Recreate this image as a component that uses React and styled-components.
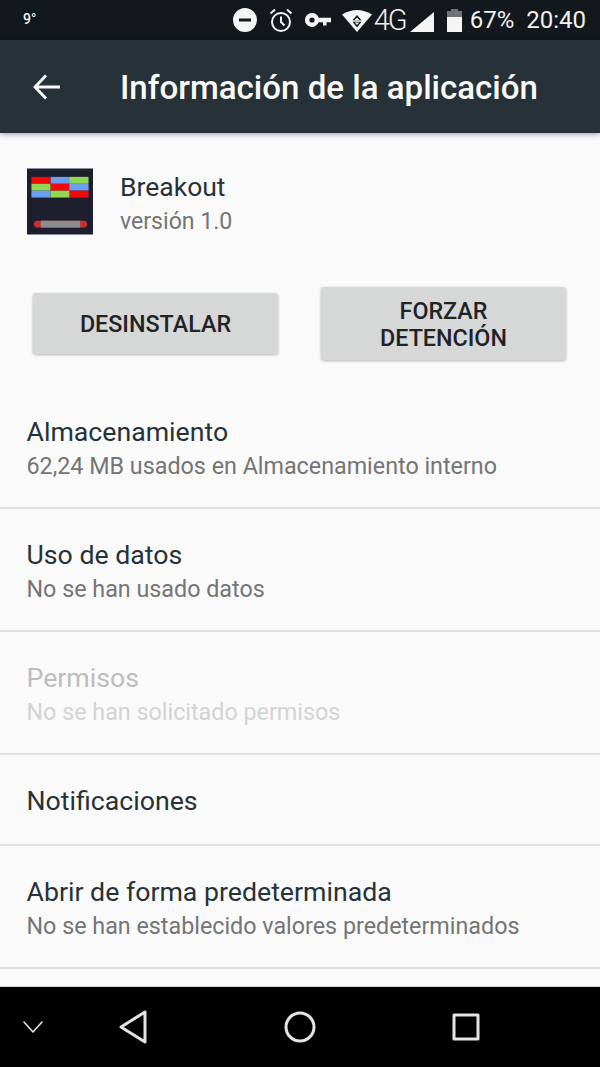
import React from 'react'
import styled, { createGlobalStyle } from 'styled-components'

const GlobalStyle = createGlobalStyle`
  html, body {
    margin: 0;
    padding: 0;
    background: #fafafa;
  }
  * {
    box-sizing: border-box;
  }
`

const Screen = styled.div`
  width: 600px;
  height: 1067px;
  display: flex;
  flex-direction: column;
  overflow: hidden;
  font-family: Roboto, "Liberation Sans", sans-serif;
  background: #fafafa;
`

const StatusBar = styled.div`
  height: 40px;
  flex: none;
  display: flex;
  align-items: center;
  padding: 0 14px 0 23px;
  background: #12181b;
  color: #f2f2f2;
`

const Temperature = styled.span`
  font-size: 14px;
  font-weight: 500;
  margin-right: auto;
  margin-top: -2px;
`

const StatusIcons = styled.div`
  display: flex;
  align-items: center;
  svg {
    display: block;
    flex: none;
  }
`

const StatusText = styled.span`
  font-size: ${(p) => p.$size || 24}px;
  font-weight: ${(p) => p.$weight || 400};
  letter-spacing: ${(p) => p.$spacing || 0}px;
  margin-left: ${(p) => p.$left || 0}px;
  line-height: 40px;
`

const AppBar = styled.header`
  height: 93px;
  flex: none;
  display: flex;
  align-items: center;
  padding: 0 0 0 33px;
  background: #263238;
  color: #fafafa;
  box-shadow: 0 2px 5px rgba(0, 0, 0, 0.3);
  position: relative;
  z-index: 1;
`

const BackButton = styled.div`
  width: 87px;
  height: 26px;
  flex: none;
  svg {
    display: block;
  }
`

const Title = styled.h1`
  margin: 0;
  padding-top: 2px;
  font-size: 33.1px;
  font-weight: 500;
  line-height: 40px;
  white-space: nowrap;
`

const Content = styled.main`
  flex: 1;
  min-height: 0;
  overflow: hidden;
  border-bottom: 1px solid #cfcfcf;
`

const AppHeader = styled.section`
  height: 102px;
  display: flex;
  align-items: flex-start;
  gap: 27px;
  padding: 35px 27px 0;
`

const AppIcon = styled.svg`
  width: 66px;
  height: 67px;
  display: block;
  flex: none;
`

const AppInfo = styled.div`
  padding-top: 2px;
`

const AppName = styled.div`
  font-size: 26.5px;
  line-height: 34px;
  color: #263238;
`

const AppVersion = styled.div`
  font-size: 23.1px;
  line-height: 36px;
  color: #757575;
`

const Buttons = styled.section`
  display: grid;
  grid-template-columns: 245px 245px;
  justify-content: space-between;
  align-items: center;
  padding: 52px 34px 0 33px;
`

const ActionButton = styled.div`
  height: ${(p) => (p.$tall ? 73 : 61)}px;
  display: flex;
  align-items: center;
  justify-content: center;
  text-align: center;
  padding-top: 2px;
  background: #d6d7d7;
  border-radius: 3px;
  box-shadow: 0 1px 3px rgba(0, 0, 0, 0.28);
  font-size: 23.3px;
  font-weight: 500;
  line-height: 27px;
  color: #1f2326;
`

const List = styled.section`
  margin-top: 55px;
`

const Row = styled.div`
  height: ${(p) => p.$height}px;
  padding: ${(p) => p.$top}px 26.5px 0;
  border-bottom: 2px solid #e1e1e1;
`

const RowTitle = styled.div`
  font-size: 26.7px;
  line-height: 34px;
  color: ${(p) => (p.$disabled ? '#bdbdbd' : '#263238')};
`

const RowSub = styled.div`
  font-size: 23.3px;
  line-height: 34px;
  color: ${(p) => (p.$disabled ? '#d3d3d3' : '#757575')};
`

const NavBar = styled.nav`
  height: 80px;
  flex: none;
  display: grid;
  grid-template-columns: 66px 134px 200px 132px 68px;
  align-items: center;
  background: #000;
  justify-items: center;
`

const NavIcon = styled.svg`
  display: block;
  fill: none;
  stroke: #e4e4e4;
  stroke-linejoin: round;
  stroke-linecap: round;
`

const rows = [
  { title: 'Almacenamiento', sub: '62,24 MB usados en Almacenamiento interno', height: 94, top: 0 },
  { title: 'Uso de datos', sub: 'No se han usado datos', height: 123, top: 29 },
  { title: 'Permisos', sub: 'No se han solicitado permisos', height: 123, top: 29, disabled: true },
  { title: 'Notificaciones', height: 91, top: 29 },
  { title: 'Abrir de forma predeterminada', sub: 'No se han establecido valores predeterminados', height: 123, top: 29 },
]

function BreakoutIcon() {
  const bricks = [
    [4.5, 8.5, '#f20808'], [24, 8.5, '#6d9eef'], [43, 8.5, '#8fd84f'],
    [4.5, 15.5, '#8fd84f'], [24, 15.5, '#f20808'], [43, 15.5, '#6d9eef'],
    [4.5, 22.5, '#6d9eef'], [24, 22.5, '#8fd84f'], [43, 22.5, '#f20808'],
  ]
  return (
    <AppIcon viewBox="0 0 67 67">
      <rect width="67" height="67" fill="#1d1f2e" />
      {bricks.map(([x, y, color]) => (
        <rect key={`${x}-${y}`} x={x} y={y} width="19.500" height="7" fill={color} />
      ))}
      <rect x="7" y="53" width="54" height="7" rx="3.500" fill="#c9302c" />
      <rect x="14" y="53" width="40" height="7" fill="#8b8a8e" />
    </AppIcon>
  )
}

function SignalIcons() {
  return (
    <StatusIcons>
      <svg width="24" height="24" viewBox="0 0 24 24">
        <path fill="#f5f5f5" fillRule="evenodd" d="M12 0a12 12 0 1 0 0 24a12 12 0 0 0 0-24zM6 10.400h12v3.200H6z" />
      </svg>
      <svg width="24" height="26" viewBox="0 0 24 26" fill="none" stroke="#f2f2f2" strokeWidth="2" style={{ marginLeft: 12 }}>
        <circle cx="12" cy="15" r="9" />
        <path d="M12 9.500V15l3.500 3.500M1.500 6.500L6 2.500M22.500 6.500L18 2.500" />
      </svg>
      <svg width="26" height="14" viewBox="0 0 26 14" style={{ marginLeft: 12 }}>
        <path fill="#f5f5f5" fillRule="evenodd" d="M7 0a7 7 0 1 0 6.600 9.200H18v3.300h3.500V9.200H26V4.800H13.600A7 7 0 0 0 7 0zm0 4.400a2.600 2.600 0 1 1 0 5.200a2.600 2.600 0 0 1 0-5.200z" />
      </svg>
      <svg width="30" height="23" viewBox="0 0 30 23" style={{ marginLeft: 11 }}>
        <path fill="#f5f5f5" d="M15 23L0 5.500Q15 -3.500 30 5.500z" />
        <path fill="#12181b" d="M15 6l-4.500 5.300h9zM15 18.500l-4.500-5.700h9z" />
        <path fill="#f5f5f5" d="M15 8.500l-2.300 2.500h4.600zM15 16l-2.300-2.500h4.600z" />
      </svg>
      <StatusText $size={29} $weight={300} $spacing={-2} $left={2}>4G</StatusText>
      <svg width="24" height="20" viewBox="0 0 24 20" style={{ marginLeft: 4, marginTop: 3 }}>
        <path fill="#f5f5f5" d="M0 20L24 0v20z" />
      </svg>
      <svg width="15" height="23" viewBox="0 0 15 23" style={{ marginLeft: 13 }}>
        <path fill="#6f7375" d="M4 0h7v2h4v8H0V2h4z" />
        <path fill="#f5f5f5" d="M0 8h15v15H0z" />
      </svg>
      <StatusText $left={8}>67%</StatusText>
      <StatusText $left={12}>20:40</StatusText>
    </StatusIcons>
  )
}

export default function App() {
  return (
    <Screen>
      <GlobalStyle />
      <StatusBar>
        <Temperature>9°</Temperature>
        <SignalIcons />
      </StatusBar>
      <AppBar>
        <BackButton>
          <svg width="27" height="26" viewBox="0 0 27 26" fill="none" stroke="#fafafa" strokeWidth="2.800">
            <path d="M2 13H27M13 1.500L2 13l11 11.500" />
          </svg>
        </BackButton>
        <Title>Información de la aplicación</Title>
      </AppBar>
      <Content>
        <AppHeader>
          <BreakoutIcon />
          <AppInfo>
            <AppName>Breakout</AppName>
            <AppVersion>versión 1.0</AppVersion>
          </AppInfo>
        </AppHeader>
        <Buttons>
          <ActionButton>DESINSTALAR</ActionButton>
          <ActionButton $tall>FORZAR<br />DETENCIÓN</ActionButton>
        </Buttons>
        <List>
          {rows.map((row) => (
            <Row key={row.title} $height={row.height} $top={row.top}>
              <RowTitle $disabled={row.disabled}>{row.title}</RowTitle>
              {row.sub && <RowSub $disabled={row.disabled}>{row.sub}</RowSub>}
            </Row>
          ))}
        </List>
      </Content>
      <NavBar>
        <NavIcon width="22" height="14" viewBox="0 0 22 14" strokeWidth="1.600">
          <path d="M2 2l9 10 9-10" />
        </NavIcon>
        <NavIcon width="28" height="34" viewBox="0 0 28 34" strokeWidth="3">
          <path d="M26 2v30L2 17z" />
        </NavIcon>
        <NavIcon width="32" height="32" viewBox="0 0 32 32" strokeWidth="3">
          <circle cx="16" cy="16" r="14" />
        </NavIcon>
        <NavIcon width="28" height="28" viewBox="0 0 28 28" strokeWidth="3">
          <rect x="2" y="2" width="24" height="24" />
        </NavIcon>
      </NavBar>
    </Screen>
  )
}
